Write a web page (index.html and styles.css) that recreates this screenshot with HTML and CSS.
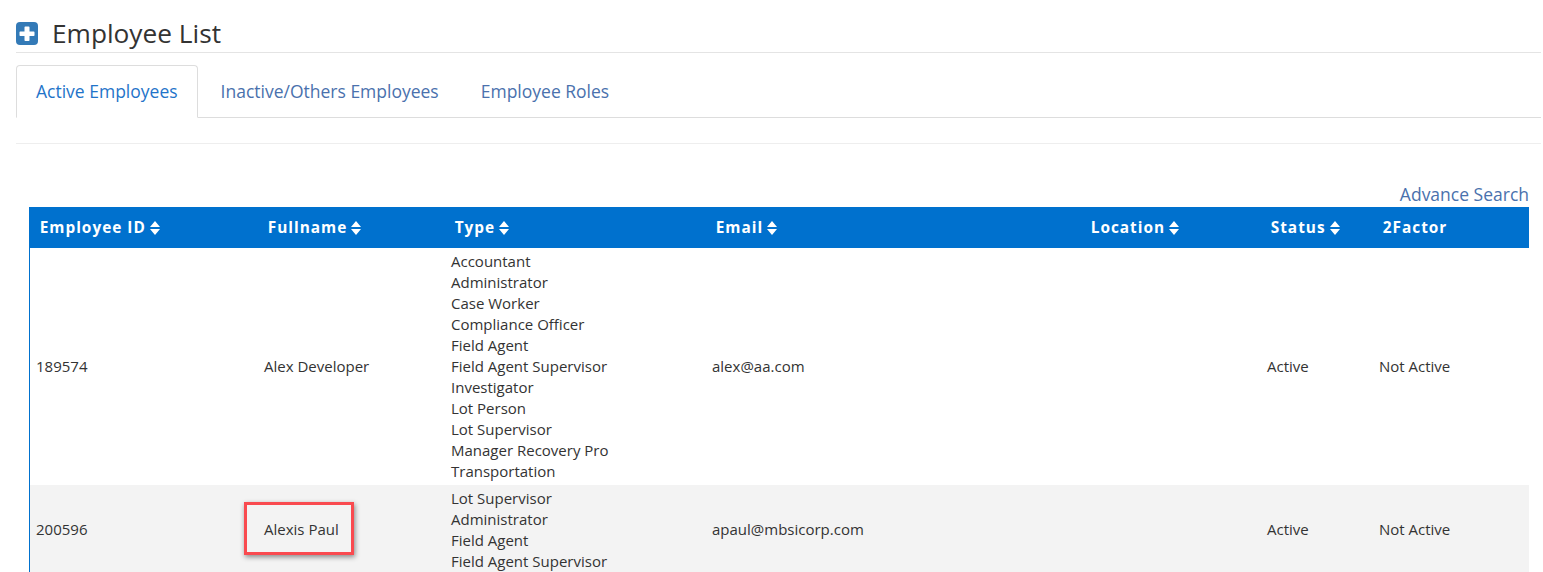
FILE: index.html
```html
<!DOCTYPE html>
<html lang="en">
<head>
<meta charset="utf-8">
<title>Employee List</title>
<link rel="stylesheet" href="styles.css">
</head>
<body>
<div class="page">
  <header class="title-bar">
    <svg class="plus-icon" viewBox="0 0 22 23" width="22" height="23" aria-hidden="true">
      <rect x="0" y="0" width="22" height="23" rx="4" fill="#337ab7"/>
      <path d="M9.300 4.500h3.400a.8.800 0 0 1 .8.800V9.500h4.200a.8.800 0 0 1 .8.800v3a.8.800 0 0 1-.8.800h-4.200v4.100a.8.800 0 0 1-.8.800H9.300a.8.800 0 0 1-.8-.8v-4.100H4.300a.8.800 0 0 1-.8-.8v-3a.8.800 0 0 1 .8-.8h4.200V5.300a.8.800 0 0 1 .8-.8z" fill="#fff"/>
    </svg>
    <h1 class="title">Employee List</h1>
  </header>

  <nav class="tabs">
    <a class="tab tab-active">Active Employees</a>
    <a class="tab">Inactive/Others Employees</a>
    <a class="tab">Employee Roles</a>
  </nav>

  <div class="divider"></div>

  <div class="table-wrap">
    <div class="search-row"><a class="advance-link">Advance Search</a></div>
    <table class="employees">
      <colgroup>
        <col class="c-id"><col class="c-name"><col class="c-type"><col class="c-email"><col class="c-loc"><col class="c-status"><col class="c-2fa">
      </colgroup>
      <thead>
        <tr>
          <th>Employee ID <svg class="sort" viewBox="0 0 10 14" aria-hidden="true"><path d="M5 0l5 6H0zM5 14L0 8h10z"/></svg></th>
          <th>Fullname <svg class="sort" viewBox="0 0 10 14" aria-hidden="true"><path d="M5 0l5 6H0zM5 14L0 8h10z"/></svg></th>
          <th>Type <svg class="sort" viewBox="0 0 10 14" aria-hidden="true"><path d="M5 0l5 6H0zM5 14L0 8h10z"/></svg></th>
          <th>Email <svg class="sort" viewBox="0 0 10 14" aria-hidden="true"><path d="M5 0l5 6H0zM5 14L0 8h10z"/></svg></th>
          <th>Location <svg class="sort" viewBox="0 0 10 14" aria-hidden="true"><path d="M5 0l5 6H0zM5 14L0 8h10z"/></svg></th>
          <th>Status <svg class="sort" viewBox="0 0 10 14" aria-hidden="true"><path d="M5 0l5 6H0zM5 14L0 8h10z"/></svg></th>
          <th>2Factor</th>
        </tr>
      </thead>
      <tbody>
        <tr>
          <td>189574</td>
          <td>Alex Developer</td>
          <td class="types">Accountant<br>Administrator<br>Case Worker<br>Compliance Officer<br>Field Agent<br>Field Agent Supervisor<br>Investigator<br>Lot Person<br>Lot Supervisor<br>Manager Recovery Pro<br>Transportation</td>
          <td>alex@aa.com</td>
          <td></td>
          <td>Active</td>
          <td>Not Active</td>
        </tr>
        <tr class="row-alt">
          <td>200596</td>
          <td class="marked">Alexis Paul<span class="highlight"></span></td>
          <td class="types">Lot Supervisor<br>Administrator<br>Field Agent<br>Field Agent Supervisor</td>
          <td>apaul@mbsicorp.com</td>
          <td></td>
          <td>Active</td>
          <td>Not Active</td>
        </tr>
      </tbody>
    </table>
  </div>
</div>
</body>
</html>
```
FILE: styles.css
```css
html, body {
  margin: 0;
  padding: 0;
  height: 572px;
  overflow: hidden;
  background: #fff;
}
body {
  font-family: "Open Sans", "Liberation Sans", sans-serif;
  font-size: 15px;
  line-height: 21px;
  color: #333;
}
.page {
  padding: 0 2px 0 16px;
}
.title-bar {
  display: flex;
  align-items: center;
  gap: 14px;
  padding-top: 15px;
  box-sizing: border-box;
  border-bottom: 1px solid #e4e4e4;
  height: 53px;
}
.plus-icon {
  flex: none;
}
.title {
  margin: 0 0 1px;
  font-size: 26.250px;
  font-weight: 400;
  line-height: 36px;
  color: #333;
}
.tabs {
  display: flex;
  margin-top: 12px;
  height: 53px;
  box-sizing: border-box;
  border-bottom: 1px solid #ddd;
}
.tab {
  padding: 0 19px;
  margin-right: 2px;
  height: 53px;
  box-sizing: border-box;
  border: 1px solid transparent;
  border-radius: 4px 4px 0 0;
  font-size: 17.500px;
  line-height: 51px;
  color: #4a71ad;
}
.tab-active {
  margin-right: 3px;
  color: #1f74c9;
  background: #fff;
  border-color: #ddd #ddd #fff;
}
.divider {
  margin-top: 25px;
  border-top: 1px solid #eee;
}
.table-wrap {
  padding: 0 12px 0 13px;
}
.search-row {
  display: flex;
  justify-content: flex-end;
  height: 63px;
  align-items: flex-end;
}
.advance-link {
  font-size: 17.500px;
  line-height: 26px;
  color: #4a71ad;
}
.employees {
  width: 1500px;
  table-layout: fixed;
  border-collapse: collapse;
}
.c-id { width: 228px; }
.c-name { width: 187px; }
.c-type { width: 261px; }
.c-email { width: 375px; }
.c-loc { width: 180px; }
.c-status { width: 112px; }
.c-2fa { width: 157px; }
.employees th {
  height: 41px;
  padding: 0 10.700px;
  background: #0071ce;
  color: #fff;
  font-size: 15.400px;
  font-weight: 700;
  letter-spacing: 1px;
  text-align: left;
}
.sort {
  width: 10px;
  height: 14px;
  margin-left: -1px;
  vertical-align: -2px;
  fill: #fff;
}
.employees td {
  padding: 3px 7px;
  vertical-align: middle;
}
.employees td:first-child {
  box-shadow: inset 1px 0 0 #0071ce;
}
.row-alt td {
  background: #f3f3f3;
  padding-bottom: 5px;
}
.row-alt .types {
  padding-bottom: 3px;
}
.marked {
  position: relative;
}
.highlight {
  position: absolute;
  left: -13px;
  top: 17px;
  width: 110px;
  height: 53px;
  box-sizing: border-box;
  border: 3px solid #f94a4f;
  box-shadow: 1px 2px 5px rgba(0, 0, 0, 0.45);
}
```
